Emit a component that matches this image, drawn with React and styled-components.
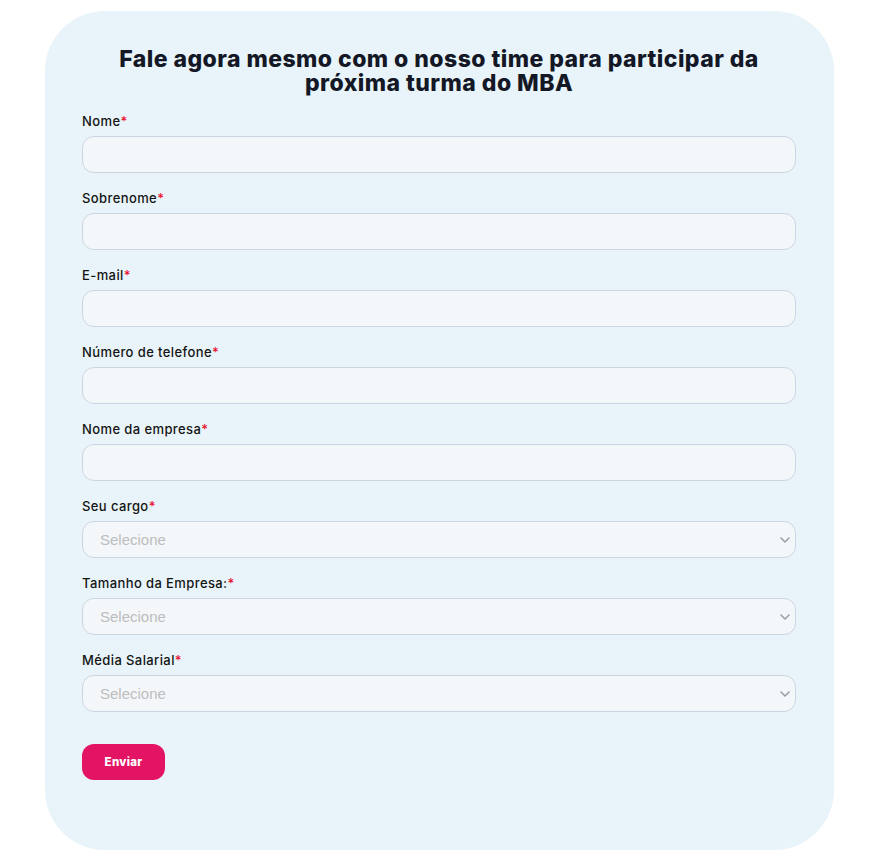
import styled, { createGlobalStyle } from "styled-components";

const GlobalStyle = createGlobalStyle`
  body {
    margin: 0;
    background: #ffffff;
    font-family: "Inter", "Noto Sans", sans-serif;
  }
`;

const fields = [
  { label: "Nome", type: "text" },
  { label: "Sobrenome", type: "text" },
  { label: "E-mail", type: "email" },
  { label: "Número de telefone", type: "tel" },
  { label: "Nome da empresa", type: "text" },
  { label: "Seu cargo", select: true },
  { label: "Tamanho da Empresa:", select: true },
  { label: "Média Salarial", select: true },
];

function Chevron() {
  return (
    <ChevronIcon width="10" height="6" viewBox="0 0 10 6" fill="none">
      <path d="M1 1l4 4 4-4" stroke="#9aa0a6" strokeWidth="1.6" strokeLinecap="round" strokeLinejoin="round" />
    </ChevronIcon>
  );
}

export default function App() {
  return (
    <Page>
      <GlobalStyle />
      <Card>
        <Title>
          Fale agora mesmo com o nosso time para participar da
          <br />
          próxima turma do MBA
        </Title>
        <Form onSubmit={(e) => e.preventDefault()}>
          {fields.map((f) => (
            <Field key={f.label}>
              <Label>
                {f.label}
                <Req>*</Req>
              </Label>
              {f.select ? (
                <SelectWrap>
                  <Select defaultValue="">
                    <option value="" disabled>
                      Selecione
                    </option>
                  </Select>
                  <Chevron />
                </SelectWrap>
              ) : (
                <Input type={f.type} />
              )}
            </Field>
          ))}
          <Button type="submit">Enviar</Button>
        </Form>
      </Card>
    </Page>
  );
}

const Page = styled.div`
  padding: 11px 40px 10px 45px;
`;

const Card = styled.div`
  background: #e8f4f9;
  border-radius: 60px;
  padding: 36px 38px 70px 37px;
  min-height: 839px;
  box-sizing: border-box;
`;

const Title = styled.h2`
  margin: 0 0 16px;
  text-align: center;
  font-family: "Inter", sans-serif;
  font-weight: 800;
  font-size: 23px;
  line-height: 24px;
  color: #141826;
  letter-spacing: 0.45px;
`;

const Form = styled.form`
  display: flex;
  flex-direction: column;
`;

const Field = styled.div`
  display: flex;
  flex-direction: column;
  margin-bottom: 15px;
`;

const Label = styled.label`
  font-size: 13px;
  font-weight: 500;
  line-height: 20px;
  color: #141414;
  letter-spacing: 0.4px;
  margin-bottom: 5px;
`;

const Req = styled.span`
  color: #e8112d;
`;

const controlBase = `
  box-sizing: border-box;
  width: 100%;
  height: 37px;
  border: 1px solid #ccd6e2;
  border-radius: 12px;
  background: #f3f7fa;
  outline: none;
`;

const Input = styled.input`
  ${controlBase}
  padding: 0 17px;
  font-size: 15px;
`;

const SelectWrap = styled.div`
  position: relative;
`;

const Select = styled.select`
  ${controlBase}
  appearance: none;
  padding: 0 17px;
  font-family: "Liberation Sans", Arial, sans-serif;
  font-size: 15px;
  color: #bdbdbd;
`;

const ChevronIcon = styled.svg`
  position: absolute;
  right: 6px;
  top: 16px;
  pointer-events: none;
`;

const Button = styled.button`
  align-self: flex-start;
  margin-top: 17px;
  width: 83px;
  height: 36px;
  border: none;
  border-radius: 12px;
  background: #e31463;
  color: #ffffff;
  font-family: "Inter", sans-serif;
  font-weight: 800;
  font-size: 11.5px;
  letter-spacing: 0.3px;
  cursor: pointer;
`;
